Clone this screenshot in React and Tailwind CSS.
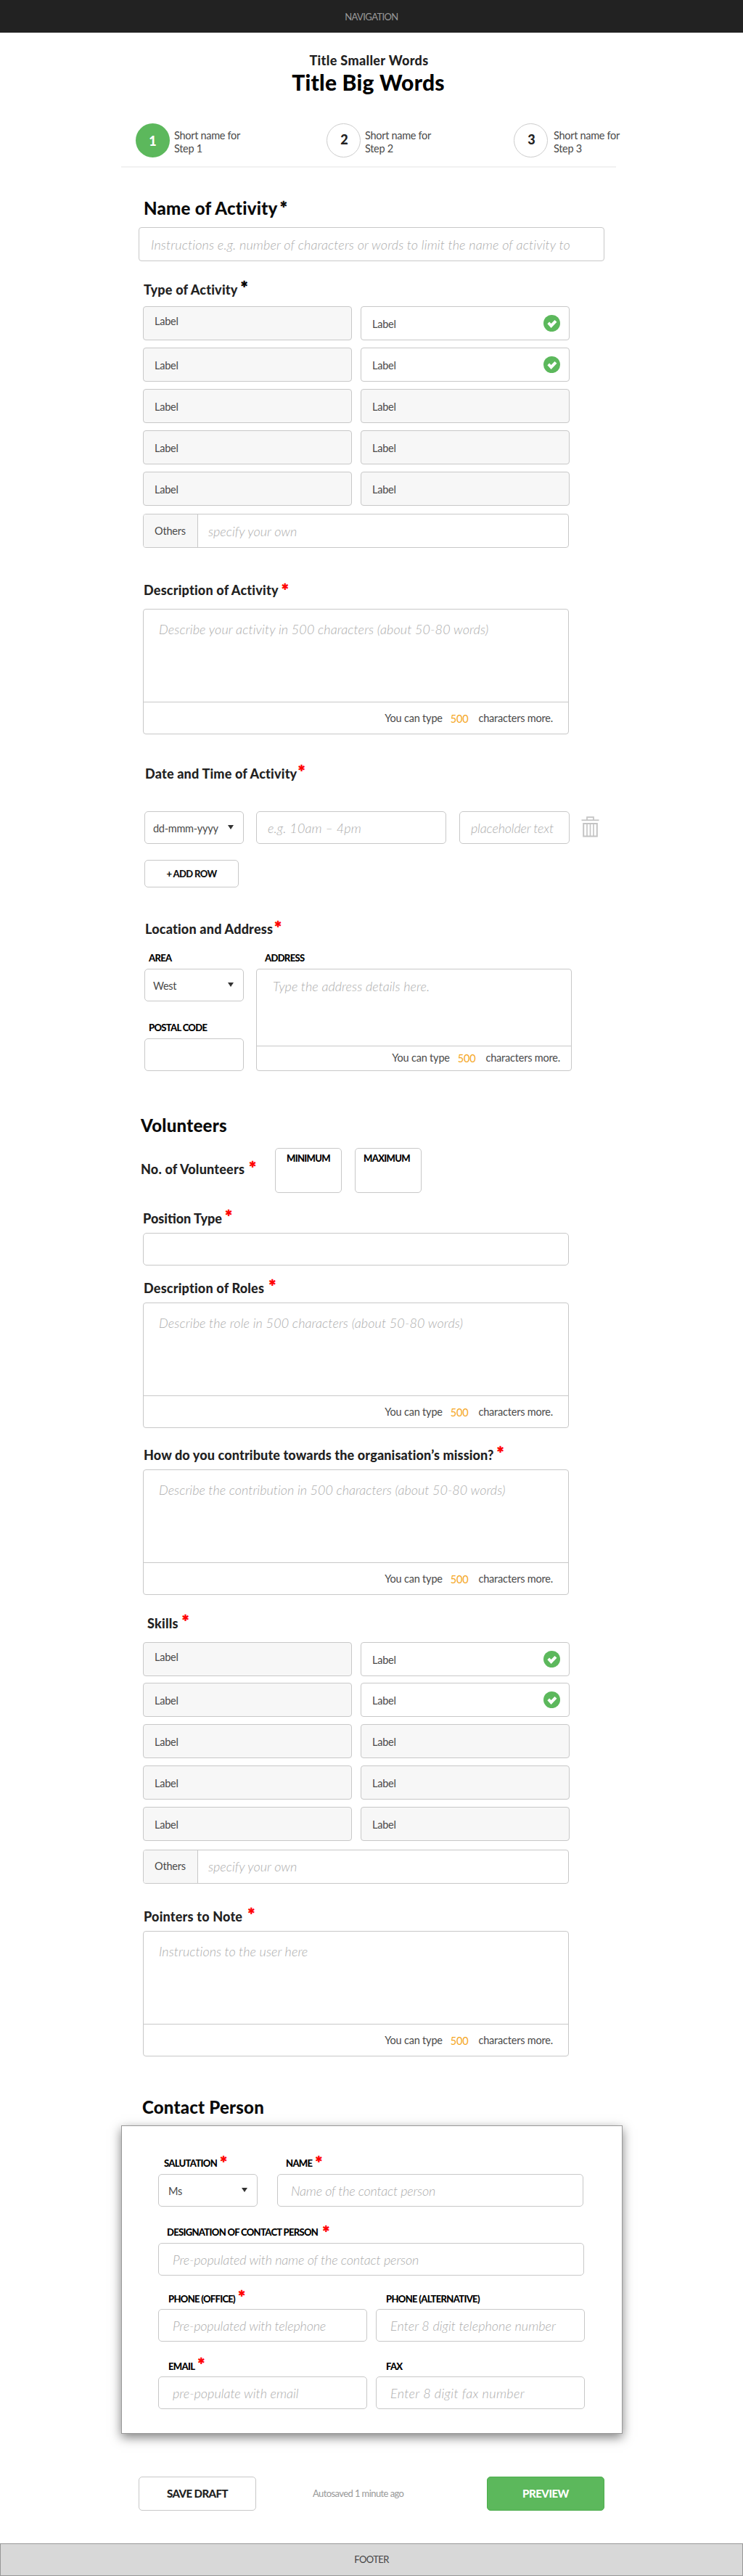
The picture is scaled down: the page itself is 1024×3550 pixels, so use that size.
import React from "react";

const border = "border border-[#c8c8c8]";

function Star({ className = "" }) {
  return (
    <span
      className={`inline-block text-[24px] font-black leading-[0] tracking-normal [-webkit-text-stroke:0.6px_currentColor] ${className}`}
    >
      *
    </span>
  );
}

function Heading({ children, className = "" }) {
  return (
    <h3 className={`h-6 whitespace-nowrap text-[18px] font-black leading-6 tracking-[0.2px] text-[#222] ${className}`}>
      {children}
    </h3>
  );
}

function SmallLabel({ children, className = "" }) {
  return (
    <div className={`h-4 whitespace-nowrap text-[13px] font-black leading-4 tracking-[-0.68px] text-black ${className}`}>
      {children}
    </div>
  );
}

function Placeholder({ children, className = "" }) {
  return (
    <span className={`whitespace-nowrap text-[18px] font-light italic leading-6 text-[#adadad] ${className}`}>
      {children}
    </span>
  );
}

function Field({ className = "", children }) {
  return (
    <div className={`flex h-[45px] items-center rounded-[5px] bg-white ${border} ${className}`}>{children}</div>
  );
}

function Caret() {
  return (
    <svg width="8" height="6" viewBox="0 0 8 6" className="mb-px">
      <path d="M0 0h8L4 6z" fill="#333" />
    </svg>
  );
}

function Select({ value, className = "pl-[11px]" }) {
  return (
    <Field className={`w-[137px] justify-between pr-[13px] text-[14.5px] tracking-[-0.28px] text-[#4a4a4a] ${className}`}>
      <span className="pt-0.5">{value}</span>
      <Caret />
    </Field>
  );
}

function Counter({ className = "" }) {
  return (
    <div
      className={`flex justify-end border-t border-[#c8c8c8] text-[14.5px] leading-5 tracking-[-0.2px] text-[#4a4a4a] ${className}`}
    >
      <span>You can type</span>
      <span className="ml-[11px] mt-px text-[#f5a623]">500</span>
      <span className="ml-[14px]">characters more.</span>
    </div>
  );
}

function TextArea({ children, className = "" }) {
  return (
    <div className={`ml-[197px] h-[173px] w-[587px] rounded-[4px] ${border} ${className}`}>
      <div className="h-[127px] pl-[21px] pt-[15px]">{children}</div>
      <Counter className="pr-[21px] pt-3" />
    </div>
  );
}

function Check() {
  return (
    <svg width="23" height="23" viewBox="0 0 23 23">
      <circle cx="11.5" cy="11.5" r="11.5" fill="#5cb85c" />
      <path d="M5.4 12.2l2.7-2.7 2.5 2.4 4.9-5 2.9 2.9-7.8 8.2z" fill="#fff" />
    </svg>
  );
}

function Option({ checked, raised }) {
  return (
    <div
      className={`flex h-[47px] items-center justify-between rounded-[4px] pl-[15px] pr-3 text-[14.5px] leading-5 tracking-[-0.25px] text-[#4a4a4a] ${border} ${
        checked ? "bg-white" : "bg-[#f7f7f7]"
      }`}
    >
      <span className={raised ? "-mt-px mb-1" : "pt-[3px]"}>Label</span>
      {checked && <Check />}
    </div>
  );
}

const options = [
  { raised: true },
  { checked: true },
  {},
  { checked: true },
  {},
  {},
  {},
  {},
  {},
  {},
];

function Options({ className = "" }) {
  return (
    <div className={`ml-[197px] w-[588px] ${className}`}>
      <div className="grid h-[275px] grid-cols-2 content-start gap-x-3 gap-y-[9.9px]">
        {options.map((o, i) => (
          <Option key={i} {...o} />
        ))}
      </div>
      <div className={`mt-[11px] flex h-[47px] w-[587px] overflow-hidden rounded-[4px] bg-white ${border}`}>
        <div className="flex w-[75px] items-center border-r border-[#c8c8c8] bg-[#f7f7f7] pl-[15px] text-[14.5px] tracking-[-0.2px] text-[#4a4a4a]">
          Others
        </div>
        <div className="flex items-center pl-[14px]">
          <Placeholder>specify your own</Placeholder>
        </div>
      </div>
    </div>
  );
}

function Step({ n, active, className = "", gap = "ml-[6px]" }) {
  return (
    <div className={`flex h-[47px] ${className}`}>
      <div
        className={`flex size-[47px] items-center justify-center rounded-full text-[18px] font-black leading-6 ${
          active ? "bg-[#5cb85c] pb-0 text-white" : "border border-[#ccc] pb-1 pl-0.5 text-[#222]"
        }`}
      >
        {n}
      </div>
      <div className={`pt-2 text-[14.5px] leading-[18px] tracking-[-0.3px] text-[#4a4a4a] ${gap}`}>
        Short name for
        <br />
        Step {n}
      </div>
    </div>
  );
}

function Trash() {
  return (
    <svg width="25" height="29" viewBox="0 0 25 29" fill="none" stroke="#c4c4c4">
      <path d="M0.5 5.3h24" strokeWidth="1.8" />
      <path d="M8 5V1.2h9V5" strokeWidth="1.7" />
      <path d="M3.2 10h18.6v17.5H3.2z" strokeWidth="2" />
      <path d="M8 10v17.5M12.5 10v17.5M17 10v17.5" strokeWidth="1.6" />
    </svg>
  );
}

export default function App() {
  return (
    <div className="flex h-[3550px] w-[1024px] flex-col bg-white font-['Lato',sans-serif] text-[#222]">
      <nav className="flex h-[45px] shrink-0 items-center justify-center bg-[#222] pt-0.5 text-[13px] tracking-[-0.6px] text-[#999]">
        NAVIGATION
      </nav>

      <header className="mt-[26px] text-center">
        <div className="h-6 pr-[7px] text-[18px] font-black leading-6 tracking-[0.35px]">Title Smaller Words</div>
        <h1 className="h-9 pr-[9px] text-[30px] font-black leading-9 tracking-[0.25px] text-black">Title Big Words</h1>
      </header>

      <div className="mt-[39px] flex pl-[187px]">
        <Step n={1} active className="w-[263px]" />
        <Step n={2} className="w-[258px]" />
        <Step n={3} gap="ml-2" />
      </div>
      <div className="ml-[167px] mt-3 h-0.5 w-[682px] shrink-0 bg-[#f1f1f1]" />

      <h2 className="ml-[198px] mt-10 h-8 text-[24px] font-black leading-8 tracking-[0.27px] text-[#0a0a0a]">
        Name of Activity
        <Star className="ml-[3px]" />
      </h2>
      <div className={`ml-[191px] mt-[10px] flex h-[47px] w-[642px] items-center rounded-[4px] pl-4 ${border}`}>
        <Placeholder className="tracking-[0.12px]">
          Instructions e.g. number of characters or words to limit the name of activity to
        </Placeholder>
      </div>

      <Heading className="ml-[198px] mt-[27px]">
        Type of Activity
        <Star className="ml-1 text-black" />
      </Heading>
      <Options className="mt-[11px]" />

      <Heading className="ml-[198px] mt-[46px]">
        Description of Activity
        <Star className="ml-1 translate-y-[3px] text-[#f00]" />
      </Heading>
      <TextArea className="mt-[14px]">
        <Placeholder className="tracking-[0.1px]">Describe your activity in 500 characters (about 50-80 words)</Placeholder>
      </TextArea>

      <Heading className="ml-[200px] mt-[42px]">
        Date and Time of Activity
        <Star className="ml-px text-[#f00]" />
      </Heading>
      <div className="ml-[199px] mt-10 flex h-[45px]">
        <Select value="dd-mmm-yyyy" />
        <Field className="ml-[17px] w-[262px] pl-[15px]">
          <Placeholder className="tracking-[0.15px]">e.g. 10am – 4pm</Placeholder>
        </Field>
        <Field className="ml-[18px] w-[152px] pl-[15px]">
          <Placeholder className="tracking-[-0.17px]">placeholder text</Placeholder>
        </Field>
        <div className="ml-4 pt-[7px]">
          <Trash />
        </div>
      </div>
      <div
        className={`ml-[199px] mt-[22px] flex h-[38px] w-[130px] items-center justify-center rounded-[5px] pt-0.5 text-[13px] font-black tracking-[-0.6px] text-[#111] ${border}`}
      >
        + ADD ROW
      </div>

      <Heading className="ml-[200px] mt-[45px]">
        Location and Address
        <Star className="ml-0.5 translate-y-px text-[#f00]" />
      </Heading>
      <div className="ml-[199px] mt-5 flex h-[164px]">
        <div className="w-[154px]">
          <SmallLabel className="pl-1.5">AREA</SmallLabel>
          <Select value="West" className="mt-[7px] pl-[11px]" />
          <SmallLabel className="mt-7 pl-1.5">POSTAL CODE</SmallLabel>
          <Field className="mt-[7px] w-[137px]" />
        </div>
        <div className="w-[435px]">
          <SmallLabel className="pl-3">ADDRESS</SmallLabel>
          <div className={`mt-[7px] h-[141px] rounded-[4px] ${border}`}>
            <div className="h-[105px] pl-[22px] pt-[11px]">
              <Placeholder className="tracking-[0.05px]">Type the address details here.</Placeholder>
            </div>
            <Counter className="pr-[15px] pt-1.5" />
          </div>
        </div>
      </div>

      <h2 className="ml-[194px] mt-[59px] h-8 text-[24px] font-black leading-8 tracking-[0.27px] text-[#0a0a0a]">
        Volunteers
      </h2>
      <div className="ml-[194px] mt-[15px] flex h-[62px]">
        <Heading className="w-[185px] pt-[17px]">
          No. of Volunteers
          <Star className="ml-[6px] translate-y-px text-[#f00]" />
        </Heading>
        <div className={`w-[92px] rounded-[5px] pt-[5px] text-center ${border}`}>
          <SmallLabel>MINIMUM</SmallLabel>
        </div>
        <div className={`ml-[18px] w-[92px] rounded-[5px] pt-[5px] text-center ${border}`}>
          <SmallLabel className="pr-1">MAXIMUM</SmallLabel>
        </div>
      </div>

      <Heading className="ml-[197px] mt-[23px] tracking-normal">
        Position Type
        <Star className="ml-1 text-[#f00]" />
      </Heading>
      <Field className="ml-[197px] mt-2 w-[587px] shrink-0" />

      <Heading className="ml-[198px] mt-[19px]">
        Description of Roles
        <Star className="ml-[6px] text-[#f00]" />
      </Heading>
      <TextArea className="mt-2">
        <Placeholder className="tracking-[0.1px]">Describe the role in 500 characters (about 50-80 words)</Placeholder>
      </TextArea>

      <Heading className="ml-[198px] mt-[25px]">
        <span className="tracking-[0.14px]">How do you contribute towards the organisation’s mission?</span>
        <Star className="ml-1 text-[#f00]" />
      </Heading>
      <TextArea className="mt-2">
        <Placeholder className="tracking-[0.02px]">Describe the contribution in 500 characters (about 50-80 words)</Placeholder>
      </TextArea>

      <Heading className="ml-[203px] mt-[27px]">
        Skills
        <Star className="ml-[5px] text-[#f00]" />
      </Heading>
      <Options className="mt-[13.5px]" />

      <Heading className="ml-[198px] mt-[33.5px]">
        Pointers to Note
        <Star className="ml-[7px] text-[#f00]" />
      </Heading>
      <TextArea className="mt-2">
        <Placeholder className="tracking-[0.03px]">Instructions to the user here</Placeholder>
      </TextArea>

      <h2 className="ml-[196px] mt-[54px] h-8 text-[24px] font-black leading-8 tracking-[0.21px] text-[#0a0a0a]">
        Contact Person
      </h2>
      <div className="ml-[167px] mt-[9px] h-[425px] w-[691px] border border-[#999] bg-white pl-[50px] pt-[43px] shadow-[0_5px_14px_rgba(0,0,0,0.5)]">
        <div className="flex">
          <div className="w-[164px]">
            <SmallLabel className="pl-2">
              SALUTATION
              <Star className="ml-1 translate-y-1 text-[#f00]" />
            </SmallLabel>
            <Select value="Ms" className="mt-[7px] pl-[13px]" />
          </div>
          <div>
            <SmallLabel className="pl-3">
              NAME
              <Star className="ml-1 translate-y-1 text-[#f00]" />
            </SmallLabel>
            <Field className="mt-[7px] w-[422px] pl-[18px]">
              <Placeholder className="tracking-[-0.23px]">Name of the contact person</Placeholder>
            </Field>
          </div>
        </div>
        <SmallLabel className="mt-[27px] pl-3">
          DESIGNATION OF CONTACT PERSON
          <Star className="ml-1.5 translate-y-[5px] text-[#f00]" />
        </SmallLabel>
        <Field className="mt-[7px] w-[587px] pl-[19px]">
          <Placeholder className="tracking-[-0.15px]">Pre-populated with name of the contact person</Placeholder>
        </Field>
        <div className="mt-6 grid w-[588px] grid-cols-2 gap-x-3">
          <div>
            <SmallLabel className="pl-3.5">
              PHONE (OFFICE)
              <Star className="ml-1 translate-y-0.5 text-[#f00]" />
            </SmallLabel>
            <Field className="mt-1.5 pl-[19px]">
              <Placeholder className="tracking-[-0.17px]">Pre-populated with telephone</Placeholder>
            </Field>
          </div>
          <div>
            <SmallLabel className="pl-3.5">PHONE (ALTERNATIVE)</SmallLabel>
            <Field className="mt-1.5 pl-[19px]">
              <Placeholder className="tracking-[0.05px]">Enter 8 digit telephone number</Placeholder>
            </Field>
          </div>
        </div>
        <div className="mt-[26px] grid w-[588px] grid-cols-2 gap-x-3">
          <div>
            <SmallLabel className="pl-3.5">
              EMAIL
              <Star className="ml-1 translate-y-0.5 text-[#f00]" />
            </SmallLabel>
            <Field className="mt-1.5 pl-[19px]">
              <Placeholder>pre-populate with email</Placeholder>
            </Field>
          </div>
          <div>
            <SmallLabel className="pl-3.5">FAX</SmallLabel>
            <Field className="mt-1.5 pl-[19px]">
              <Placeholder className="tracking-[0.35px]">Enter 8 digit fax number</Placeholder>
            </Field>
          </div>
        </div>
      </div>

      <div className="ml-[191px] mt-[59px] flex h-[47px] w-[642px] items-center">
        <button
          className={`h-[47px] w-[162px] rounded-[5px] bg-white text-[15px] font-black tracking-[-0.55px] text-[#222] ${border}`}
        >
          SAVE DRAFT
        </button>
        <span className="ml-[78px] text-[13px] tracking-[-0.59px] text-[#999]">Autosaved 1 minute ago</span>
        <button className="ml-auto h-[47px] w-[162px] rounded-[5px] border border-[#4cae4c] bg-[#5cb85c] text-[15px] font-black tracking-[-0.5px] text-white">
          PREVIEW
        </button>
      </div>

      <footer className="mt-[45px] flex h-[45px] shrink-0 items-center justify-center border border-[#979797] bg-[#d8d8d8] text-[13px] tracking-[-0.6px] text-[#444]">
        FOOTER
      </footer>
    </div>
  );
}
